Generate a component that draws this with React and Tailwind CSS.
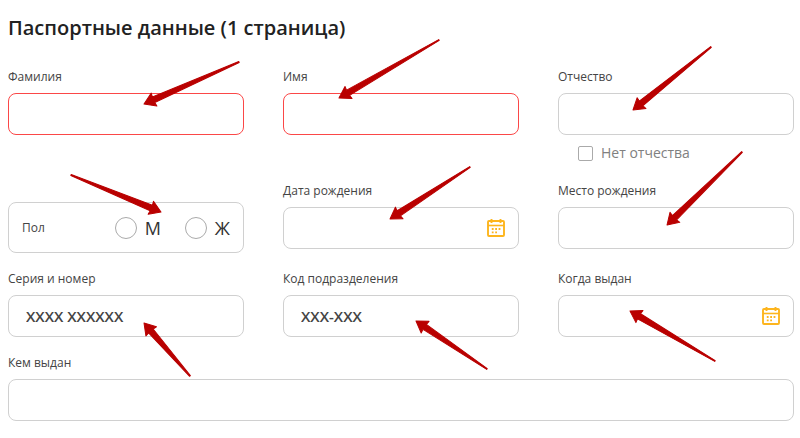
import { useState } from "react"

// Tapered red pointer, drawn from the tail to the tip
const Arrow = ({ from, to }) => {
  const [x1, y1] = from
  const [x2, y2] = to
  const length = Math.hypot(x1 - x2, y1 - y2)
  const angle = (Math.atan2(y1 - y2, x1 - x2) * 180) / Math.PI
  const points = `0,0 11,-7 10.5,-3 ${length},-0.5 ${length},0.5 10.5,3 11,7`

  return (
    <svg
      className="absolute left-0 top-0 z-10 w-px h-px overflow-visible pointer-events-none"
      aria-hidden="true"
    >
      <polygon
        points={points}
        transform={`translate(${x2} ${y2}) rotate(${angle})`}
        fill="#b90000"
        stroke="#b90000"
        strokeLinejoin="round"
      />
    </svg>
  )
}

const CalendarIcon = () => (
  <svg viewBox="0 0 18 18" className="w-[18px] h-[18px]" fill="none" stroke="#fdb51e" aria-hidden="true">
    <rect x="1" y="2" width="16" height="15" rx="1" strokeWidth="1.9" />
    <path d="M1 6.5h16" strokeWidth="1.6" />
    <path d="M4.5 0v4M13.5 0v4" strokeWidth="1.9" />
    <path d="M4.8 10h1.8M8.2 10h1.8M11.6 10h1.8M4.8 13.3h1.8M8.2 13.3h1.8" strokeWidth="1.8" />
  </svg>
)

const Field = ({ id, label, placeholder, error, calendar, arrow, className = "", children }) => (
  <div className={className}>
    <label htmlFor={id} className="block mb-1.5 text-xs leading-5 text-[#444]">
      {label}
    </label>
    <div className="relative">
      <input
        id={id}
        type="text"
        placeholder={placeholder}
        className={`block w-full h-[42px] px-[17px] rounded-lg border bg-white text-[15px] font-semibold text-[#444] placeholder:text-[#444] outline-none ${
          error ? "border-[#fb4747]" : "border-[#d0d0d0]"
        }`}
      />
      {calendar && (
        <button
          type="button"
          aria-label="Открыть календарь"
          className="absolute inset-y-0 right-[14px] flex items-center"
        >
          <CalendarIcon />
        </button>
      )}
      {arrow && <Arrow from={arrow.from} to={arrow.to} />}
    </div>
    {children}
  </div>
)

const GenderOption = ({ value, label, selected, onChange }) => (
  <label className="flex items-center gap-2 text-lg leading-6 text-[#333]">
    <input
      type="radio"
      name="gender"
      value={value}
      checked={selected === value}
      onChange={() => onChange(value)}
      className="appearance-none w-[22px] h-[22px] rounded-full border border-[#aaa] bg-white checked:border-[6px] checked:border-[#fdb827]"
    />
    {label}
  </label>
)

const App = () => {
  const [gender, setGender] = useState("")
  const [noPatronymic, setNoPatronymic] = useState(false)

  return (
    <form className="pt-[14px] pb-4 pl-2 pr-1.5 bg-white font-['Open_Sans','Noto_Sans',sans-serif]">
      <h1 className="mb-[25px] text-xl leading-7 font-semibold text-[#222]">
        Паспортные данные (1 страница)
      </h1>

      <div className="grid grid-cols-3 gap-x-[39px] gap-y-4 items-start">
        <Field id="surname" label="Фамилия" error arrow={{ from: [231, -31], to: [136, 11] }} />
        <Field id="name" label="Имя" error arrow={{ from: [156, -53], to: [56, 5] }} />
        <Field id="patronymic" label="Отчество" arrow={{ from: [153, -46], to: [75, 17] }}>
          <label className="flex items-center gap-2 mt-1.5 pl-5 text-sm leading-6 text-[#808080]">
            <input
              type="checkbox"
              checked={noPatronymic}
              onChange={(e) => setNoPatronymic(e.target.checked)}
              className="appearance-none w-[15px] h-[15px] rounded-xs border border-[#aaa] bg-white checked:bg-[#fdb827]"
            />
            Нет отчества
          </label>
        </Field>

        {/* Gender */}
        <fieldset className="relative flex items-center justify-between h-[51px] mt-[21px] px-[13px] rounded-lg border border-[#d0d0d0]">
          <span className="text-xs leading-5 text-[#444]">Пол</span>
          <div className="flex gap-6">
            <GenderOption value="m" label="М" selected={gender} onChange={setGender} />
            <GenderOption value="f" label="Ж" selected={gender} onChange={setGender} />
          </div>
          <Arrow from={[62, -28]} to={[152, 9]} />
        </fieldset>
        <Field id="birth-date" label="Дата рождения" calendar arrow={{ from: [187, -40], to: [107, 12] }} />
        <Field id="birth-place" label="Место рождения" arrow={{ from: [184, -55], to: [109, 18] }} />

        {/* Document */}
        <Field
          id="number"
          label="Серия и номер"
          placeholder="XXXX XXXXXX"
          arrow={{ from: [182, 81], to: [136, 28] }}
        />
        <Field
          id="code"
          label="Код подразделения"
          placeholder="XXX-XXX"
          arrow={{ from: [204, 74], to: [133, 26] }}
        />
        <Field id="issue-date" label="Когда выдан" calendar arrow={{ from: [157, 66], to: [72, 16] }} />
        <Field id="issued-by" label="Кем выдан" className="col-span-3" />
      </div>
    </form>
  )
}

export default App
